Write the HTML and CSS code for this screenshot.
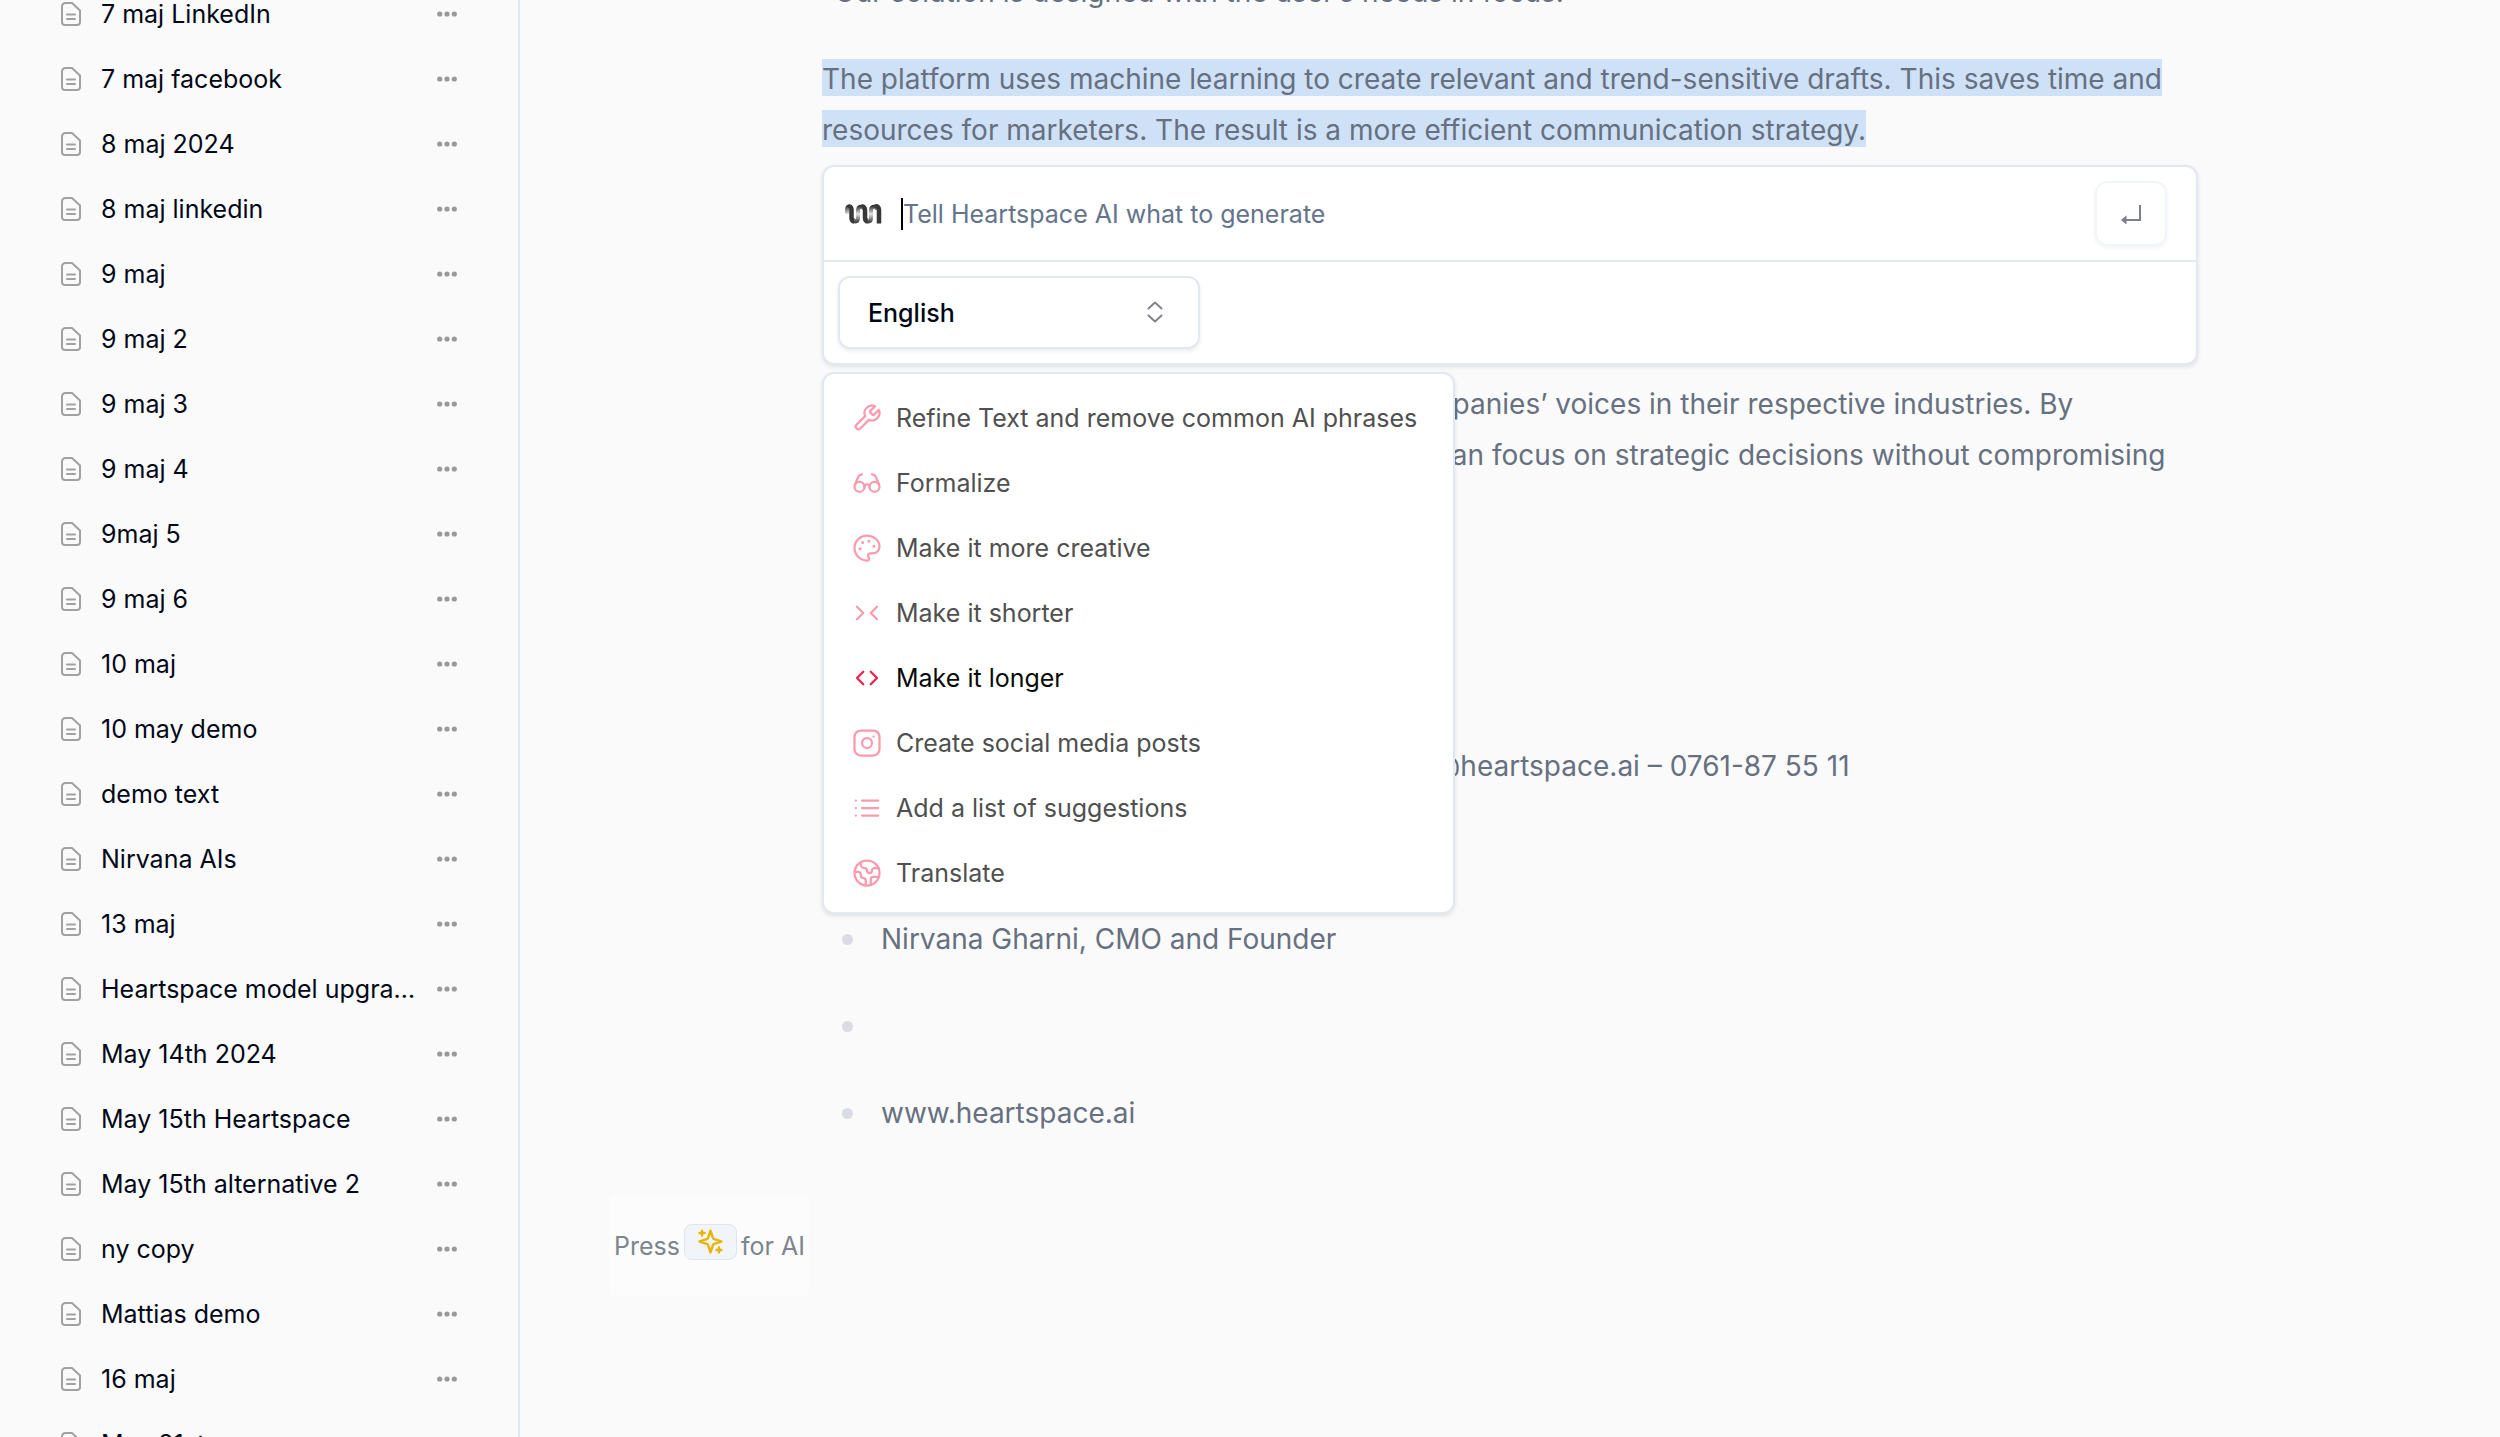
FILE: index.html
```html
<!DOCTYPE html>
<html lang="en">
<head>
<meta charset="utf-8">
<meta name="viewport" content="width=device-width, initial-scale=1">
<title>Heartspace editor</title>
<link rel="stylesheet" href="styles.css">
</head>
<body>
<svg class="sprite" aria-hidden="true">
  <symbol id="doc" viewBox="0 0 20 24"><path d="M4.500 1h6.500l8 7.500V20a3 3 0 0 1-3 3H4a3 3 0 0 1-3-3V4.500A3.500 3.500 0 0 1 4.500 1zM6 12.500h8M6 17h8"/></symbol>
  <symbol id="dots" viewBox="0 0 20 6"><circle cx="2.700" cy="3" r="2.600"/><circle cx="10" cy="3" r="2.600"/><circle cx="17.300" cy="3" r="2.600"/></symbol>
</svg>
<div class="app">
  <nav class="sidebar" aria-label="Documents">
    <ul class="docs" id="docs"></ul>
  </nav>
  <main class="main">
    <article class="prose">
      <p>“Our solution is designed with the user’s needs in focus.”</p>
      <p><span class="selected">The platform uses machine learning to create relevant and trend-sensitive drafts. This saves time and <br>resources for marketers. The result is a more efficient communication strategy.</span></p>
      <p class="goal">The aim of Heartspace is to strengthen the companies’ voices in their respective industries. By<br>reducing the time spent on daily content, they can focus on strategic decisions without compromising</p>
      <p class="contact">For more information, contact – nirvana.gharni@heartspace.ai – 0761-87 55 11</p>
      <ul class="facts">
        <li>Nirvana Gharni, CMO and Founder</li>
        <li></li>
        <li>www.heartspace.ai</li>
      </ul>

      <div class="assistant">
        <form class="panel">
          <div class="prompt">
            <svg class="logo" viewBox="0 0 37 20" aria-hidden="true">
              <defs>
                <linearGradient id="fade" x1="0" y1="0" x2="0" y2="20" gradientUnits="userSpaceOnUse">
                  <stop offset="0.100" stop-color="#333"/><stop offset="0.500" stop-color="#e4e4e4"/><stop offset="0.900" stop-color="#444"/>
                </linearGradient>
              </defs>
              <path d="M2 10V6C2 1.500 6.500 1.500 6.500 6M8 14c0 4.500 5 4.500 5 0V6c0-4.500 6-4.500 6 0M21 14c0 4.500 5 4.500 5 0V6c0-4.500 6-4.500 6 0" fill="none" stroke="url(#fade)" stroke-width="4"/>
              <path d="M3 3.500C4.500 1.500 6.500 3 6.500 6v8c0 2 1 3.500 2.500 3.500M16.500 3c1.500-1 3.500 0 3.500 3v8c0 2 1 3.500 2.500 3.500M30 3c2-1.500 4 0 4 3v13.500" fill="none" stroke="#383838" stroke-width="4.500"/>
            </svg>
            <span class="caret"></span>
            <input class="ask" type="text" placeholder="Tell Heartspace AI what to generate" aria-label="Prompt">
            <button class="send" type="button" aria-label="Send">
              <svg viewBox="0 0 22 20" aria-hidden="true"><path d="M20 1v15H3M5.500 13.500L2.500 16l3 2.500z"/></svg>
            </button>
          </div>
          <div class="options">
            <div class="picker">
              <select class="language" aria-label="Language"><option>English</option><option>Swedish</option></select>
              <svg class="updown" viewBox="0 0 16 22" aria-hidden="true"><path d="M1.500 7.500L8 1.500l6.500 6M1.500 14.500l6.500 6 6.500-6"/></svg>
            </div>
          </div>
        </form>
        <div class="menu">
          <button class="item" type="button"><svg viewBox="0 0 24 24"><path d="M14.700 6.300a1 1 0 0 0 0 1.400l1.600 1.600a1 1 0 0 0 1.400 0l3.770-3.770a6 6 0 0 1-7.940 7.940l-6.910 6.910a2.120 2.120 0 0 1-3-3l6.910-6.910a6 6 0 0 1 7.940-7.940l-3.760 3.760z"/></svg>Refine Text and remove common AI phrases</button>
          <button class="item" type="button"><svg viewBox="0 0 24 24"><circle cx="6" cy="15" r="4"/><circle cx="18" cy="15" r="4"/><path d="M14 15a2 2 0 0 0-4 0M2.500 13L5 7c.7-1.300 1.400-2 3-2M21.500 13L19 7c-.7-1.300-1.500-2-3-2"/></svg>Formalize</button>
          <button class="item" type="button"><svg viewBox="0 0 24 24"><path d="M12 2C6.500 2 2 6.500 2 12s4.500 10 10 10c.926 0 1.648-.746 1.648-1.688 0-.437-.18-.835-.437-1.125-.29-.289-.438-.652-.438-1.125a1.640 1.640 0 0 1 1.668-1.668h1.996c3.051 0 5.555-2.503 5.555-5.554C21.965 6.012 17.461 2 12 2z"/><g class="dot"><circle cx="13.500" cy="6.500" r="0.700"/><circle cx="17.500" cy="10.500" r="0.700"/><circle cx="8.500" cy="7.500" r="0.700"/><circle cx="6.500" cy="12.500" r="0.700"/></g></svg>Make it more creative</button>
          <button class="item" type="button"><svg viewBox="0 0 24 24"><path d="M4 7l5 5-5 5M20 7l-5 5 5 5"/></svg>Make it shorter</button>
          <button class="item current" type="button"><svg viewBox="0 0 24 24"><path d="M9 7l-5 5 5 5M15 7l5 5-5 5"/></svg>Make it longer</button>
          <button class="item" type="button"><svg viewBox="0 0 24 24"><rect x="2" y="2" width="20" height="20" rx="5"/><circle cx="12" cy="12" r="4"/><path d="M17.200 6.800h.1"/></svg>Create social media posts</button>
          <button class="item" type="button"><svg viewBox="0 0 24 24"><path d="M8 6h13M8 12h13M8 18h13M3 6h.1M3 12h.1M3 18h.1"/></svg>Add a list of suggestions</button>
          <button class="item" type="button"><svg viewBox="0 0 24 24"><circle cx="12" cy="12" r="10"/><path d="M21.540 15H17a2 2 0 0 0-2 2v4.540M7 3.340V5a3 3 0 0 0 3 3 2 2 0 0 1 2 2c0 1.100.9 2 2 2a2 2 0 0 0 2-2c0-1.100.9-2 2-2h3.170M11 21.950V18a2 2 0 0 0-2-2 2 2 0 0 1-2-2v-1a2 2 0 0 0-2-2H2.050"/></svg>Translate</button>
        </div>
      </div>
    </article>
    <div class="hint">
      <span>Press</span>
      <button class="spark" type="button" aria-label="AI">
        <svg viewBox="0 0 24 24"><path d="M12 3l-1.912 5.813a2 2 0 0 1-1.275 1.275L3 12l5.813 1.912a2 2 0 0 1 1.275 1.275L12 21l1.912-5.813a2 2 0 0 1 1.275-1.275L21 12l-5.813-1.912a2 2 0 0 1-1.275-1.275L12 3ZM5 3v4M3 5h4M19 17v4M17 19h4"/></svg>
      </button>
      <span>for AI</span>
    </div>
  </main>
</div>
<script src="app.js"></script>
</body>
</html>
```
FILE: app.js
```js
const names = [
  "7 maj LinkedIn", "7 maj facebook", "8 maj 2024", "8 maj linkedin", "9 maj",
  "9 maj 2", "9 maj 3", "9 maj 4", "9maj 5", "9 maj 6", "10 maj", "10 may demo",
  "demo text", "Nirvana AIs", "13 maj", "Heartspace model upgrade", "May 14th 2024",
  "May 15th Heartspace", "May 15th alternative 2", "ny copy", "Mattias demo",
  "16 maj", "May 21st"
];

document.getElementById("docs").innerHTML = names.map(name => `
  <li class="row">
    <a class="doc" href="#"><svg class="doc-icon" aria-hidden="true"><use href="#doc"/></svg><span class="name">${name}</span></a>
    <button class="more" type="button" aria-label="More options"><svg aria-hidden="true"><use href="#dots"/></svg></button>
  </li>`).join("");
```
FILE: styles.css
```css
* { box-sizing: border-box; }

body {
  margin: 0;
  background: #fafafa;
  color: #020817;
  font-family: Inter, "Open Sans", sans-serif;
  font-size: 25px;
}

button, input, select { font: inherit; color: inherit; }
button { padding: 0; border: 0; background: none; cursor: pointer; }
ul { margin: 0; padding: 0; list-style: none; }
.sprite { display: none; }

.app { display: flex; height: 100vh; overflow: hidden; }

/* Sidebar, scrolled part of the way down */
.sidebar {
  flex: none;
  width: 520px;
  border-right: 2px solid #e2e8f0;
  overflow: hidden;
}
.docs { margin-top: -19px; }
.row {
  display: flex;
  align-items: center;
  height: 65px;
  padding: 0 61px;
}
.doc {
  display: flex;
  flex: 1;
  align-items: center;
  gap: 20px;
  min-width: 0;
  color: inherit;
  text-decoration: none;
}
.doc-icon {
  flex: none;
  width: 20px;
  height: 24px;
  fill: none;
  stroke: #a1a1a1;
  stroke-width: 2;
  stroke-linecap: round;
  stroke-linejoin: round;
}
.name {
  overflow: hidden;
  white-space: nowrap;
  text-overflow: ellipsis;
  line-height: 36px;
}
.more { display: flex; margin-left: 18px; }
.more svg { width: 20px; height: 6px; fill: #999; }

/* Document */
.main { flex: 1; min-width: 0; overflow: hidden; }
.prose {
  position: relative;
  max-width: 1376px;
  margin: -33px auto 0;
  color: #667080;
  font-size: 28px;
  line-height: 51px;
}
.prose p { margin: 0 0 36px; }
.selected {
  padding-top: 3px;
  background: #cfe1f7;
  -webkit-box-decoration-break: clone;
  box-decoration-break: clone;
}
.prose .goal { margin: 223px 0 260px; }
.prose .contact { margin-bottom: 122px; }
.facts { display: grid; gap: 36px; }
.facts li {
  display: flex;
  align-items: center;
  gap: 28px;
  height: 51px;
  padding-left: 20px;
}
.facts li::before {
  content: "";
  width: 11px;
  height: 11px;
  border-radius: 50%;
  background: #d9dce2;
}

/* AI assistant floating over the text */
.assistant {
  position: absolute;
  top: 198px;
  left: 0;
  right: 0;
  color: #020817;
  font-size: 25px;
  line-height: 36px;
}
.panel, .menu {
  border: 2px solid #e2e8f0;
  border-radius: 12px;
  background: #fff;
  box-shadow: 0 2px 4px rgba(0, 0, 0, .1);
}
.prompt {
  display: flex;
  align-items: center;
  height: 95px;
  padding: 0 29px 0 21px;
  border-bottom: 2px solid #e2e8f0;
}
.logo { width: 37px; height: 20px; }
.caret {
  width: 2px;
  height: 32px;
  margin-left: 19px;
  background: #000;
}
.ask {
  flex: 1;
  min-width: 0;
  padding: 0;
  border: 0;
  outline: 0;
  background: none;
}
.ask::placeholder { color: #64748b; opacity: 1; }
.send {
  display: grid;
  place-items: center;
  width: 72px;
  height: 65px;
  border: 2px solid #f1f5f9;
  border-radius: 12px;
  box-shadow: 0 2px 4px rgba(0, 0, 0, .05);
}
.send svg {
  width: 22px;
  height: 20px;
  fill: none;
  stroke: #7d818b;
  stroke-width: 2;
}
.options { padding: 14px; }
.picker { position: relative; width: 362px; }
.language {
  display: block;
  width: 100%;
  height: 73px;
  padding: 0 28px;
  border: 2px solid #e2e8f0;
  border-radius: 12px;
  background: #fff;
  box-shadow: 0 2px 4px rgba(0, 0, 0, .08);
  font-weight: 500;
  appearance: none;
}
.updown {
  position: absolute;
  top: 25px;
  right: 37px;
  width: 16px;
  height: 22px;
  fill: none;
  stroke: #80838b;
  stroke-width: 2;
  stroke-linecap: round;
  stroke-linejoin: round;
  pointer-events: none;
}
.menu {
  width: 633px;
  margin-top: 7px;
  padding: 11px 0 7px;
}
.item {
  display: flex;
  align-items: center;
  gap: 14px;
  width: 100%;
  height: 65px;
  padding-left: 28px;
  color: #505050;
  text-align: left;
  white-space: nowrap;
}
.item svg {
  flex: none;
  width: 30px;
  height: 30px;
  fill: none;
  stroke: #fa9bad;
  stroke-width: 1.8;
  stroke-linecap: round;
  stroke-linejoin: round;
}
.item .dot { fill: #fa9bad; stroke-width: 1; }
.item.current { color: #0a0a0a; }
.item.current svg { stroke: #ee1f50; }

/* Keyboard hint */
.hint {
  display: flex;
  align-items: center;
  gap: 4px;
  width: max-content;
  height: 99px;
  margin: 57px 0 0 90px;
  padding: 0 4px;
  background: #fcfcfc;
  color: #7d868c;
}
.spark {
  display: grid;
  place-items: center;
  width: 53px;
  height: 36px;
  margin-bottom: 8px;
  border: 1px solid #dde5ee;
  border-radius: 8px;
  background: #f1f5f9;
}
.spark svg {
  width: 29px;
  height: 29px;
  fill: none;
  stroke: #eab308;
  stroke-width: 2;
  stroke-linecap: round;
  stroke-linejoin: round;
}
```
